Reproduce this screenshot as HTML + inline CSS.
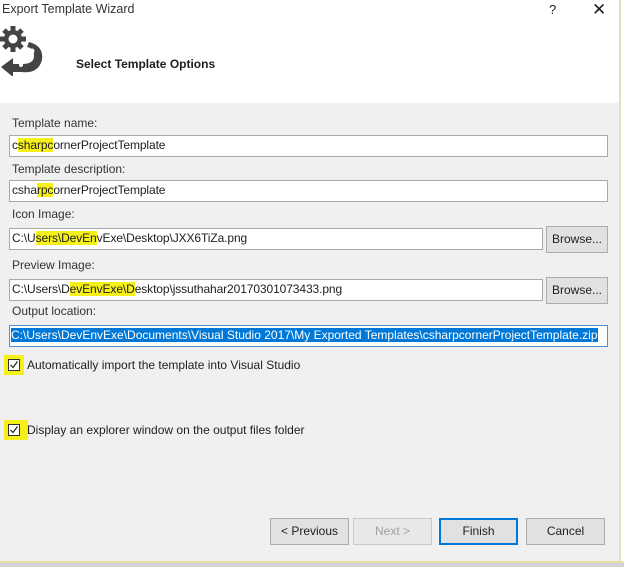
<!DOCTYPE html>
<html><head><style>
body{margin:0;width:624px;height:567px;position:relative;background:#fff;font-family:"Liberation Sans",sans-serif;font-size:12px;color:#1e1e1e;overflow:hidden}
.a{position:absolute}
.grey{left:0;top:103px;width:619px;height:458px;background:#f0f0f0}
.inp{position:absolute;background:#fff;border:1px solid #a9a9a9;line-height:19px;padding-left:2px;box-sizing:border-box;height:22px;white-space:nowrap;letter-spacing:-0.1px}
.lbl{position:absolute;left:12px;color:#333}
.hl{background:#f5ef1a}
.br{position:absolute;background:#e1e1e1;border:1px solid #adadad;box-sizing:border-box;text-align:center;line-height:25px}
.btn{position:absolute;top:518px;height:27px;width:79px;background:#e1e1e1;border:1px solid #adadad;box-sizing:border-box;text-align:center;line-height:25px}
.cb{position:absolute;left:4px;width:20px;height:20px;background:#f5ef1a}
.cb div{position:absolute;left:4px;top:4px;width:12px;height:12px;border:1px solid #333;background:#fff;box-sizing:border-box}
</style></head><body>
<div class="a grey"></div>
<div class="a" style="left:619px;top:0;width:2px;height:562px;background:#e6e2b8"></div>
<div class="a" style="left:0;top:561px;width:624px;height:2px;background:#e6e0a0"></div>
<div class="a" style="left:0;top:563px;width:624px;height:4px;background:#d4d0dc"></div>
<div class="a" style="left:2px;top:2px;font-size:12.5px;color:#333">Export Template Wizard</div>
<div class="a" style="left:549px;top:2px;font-size:13px">?</div>
<div class="a" style="left:592px;top:0px;font-size:17px">✕</div>
<svg class="a" style="left:0;top:26px" width="46" height="50" viewBox="0 0 46 50">
<g fill="#444">
<g stroke="#444" stroke-width="5"><line x1="13" y1="0" x2="13" y2="26"/><line x1="0" y1="13" x2="26" y2="13"/><line x1="4" y1="4" x2="22" y2="22"/><line x1="22" y1="4" x2="4" y2="22"/></g>
<circle cx="13" cy="13" r="9"/>
<circle cx="13" cy="13" r="4.5" fill="#fff"/>
<path d="M29 16 Q44 20 42 34 Q38 48 22 46 L13 46 L13 51 L1 41 L13 32 L13 38 L22 38 Q34 38 34 30 Q34 22 27 21Z"/>
<circle cx="26" cy="31" r="5" fill="#fff"/><circle cx="32" cy="25" r="2.5" fill="#fff"/><circle cx="21" cy="39" r="2" fill="#fff"/>
</g></svg>
<div class="a" style="left:76px;top:57px;font-weight:bold;font-size:12px">Select Template Options</div>

<div class="lbl" style="top:116px">Template name:</div>
<div class="inp" style="left:9px;top:135px;width:599px">c<span class="hl">sharpc</span>ornerProjectTemplate</div>
<div class="lbl" style="top:162px">Template description:</div>
<div class="inp" style="left:9px;top:180px;width:599px">csha<span class="hl">rpc</span>ornerProjectTemplate</div>
<div class="lbl" style="top:207px">Icon Image:</div>
<div class="inp" style="left:9px;top:228px;width:534px">C:\U<span class="hl">sers\DevEn</span>vExe\Desktop\JXX6TiZa.png</div>
<div class="br" style="left:546px;top:226px;width:62px;height:27px">Browse...</div>
<div class="lbl" style="top:258px">Preview Image:</div>
<div class="inp" style="left:9px;top:279px;width:534px">C:\Users\D<span class="hl">evEnvExe\D</span>esktop\jssuthahar20170301073433.png</div>
<div class="br" style="left:546px;top:277px;width:62px;height:27px">Browse...</div>
<div class="lbl" style="top:304px">Output location:</div>
<div class="inp" style="left:9px;top:325px;width:599px;border-color:#4a90d9;padding-left:1px;letter-spacing:0"><span style="background:#0078d7;color:#fff">C:\Users\DevEnvExe\Documents\Visual Studio 2017\My Exported Templates\csharpcornerProjectTemplate.zip</span></div>
<div class="cb" style="top:355px"><div><svg width="10" height="10" style="position:absolute;left:0;top:0"><path d="M1.5 5 L4 7.5 L8.5 1.5" stroke="#222" fill="none" stroke-width="1.2"/></svg></div></div>
<div class="a" style="left:27px;top:358px">Automatically import the template into Visual Studio</div>
<div class="cb" style="top:420px"><div><svg width="10" height="10" style="position:absolute;left:0;top:0"><path d="M1.5 5 L4 7.5 L8.5 1.5" stroke="#222" fill="none" stroke-width="1.2"/></svg></div></div>
<div class="a" style="left:24px;top:420px;width:4px;height:20px;background:#f5ef1a"></div>
<div class="a" style="left:27px;top:423px">Display an explorer window on the output files folder</div>

<div class="btn" style="left:270px">&lt; Previous</div>
<div class="btn" style="left:353px;color:#a0a0a0;border-color:#c8c8c8;background:#e8e8e8">Next &gt;</div>
<div class="btn" style="left:439px;border:2px solid #0078d7;line-height:23px">Finish</div>
<div class="btn" style="left:526px">Cancel</div>
</body></html>
